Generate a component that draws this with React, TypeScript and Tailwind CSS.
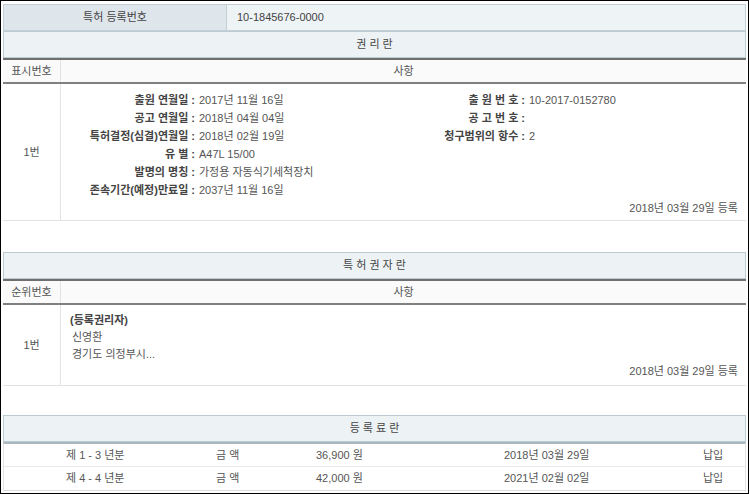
const font = { fontFamily: '"Liberation Sans", "Noto Sans CJK KR", sans-serif' };

const SectionHeader = ({ title }: { title: string }) => (
  <div className="h-[27px] flex items-center justify-center bg-[#edf2f5] border border-[#bccad2] text-[#444]">
    {title}
  </div>
);

const SubHeader = ({ first }: { first: string }) => (
  <div className="flex h-[26px] bg-[#fafafa] border-t-2 border-b-2 border-t-[#6f6f6f] border-b-[#808080] text-[#555]">
    <div className="w-[58px] flex items-center justify-center border-r border-[#e3e3e3]">{first}</div>
    <div className="flex-1 flex items-center justify-center">사항</div>
  </div>
);

const Field = ({ label, value, labelW }: { label: string; value: string; labelW: string }) => (
  <div className="flex h-[18px] items-center">
    <div className={`${labelW} text-right font-bold text-[#444] whitespace-nowrap`}>{label} :</div>
    <div className="pl-[4px] text-[#555] whitespace-nowrap">{value}</div>
  </div>
);

export default function App() {
  const left = [
    ['출원 연월일', '2017년 11월 16일'],
    ['공고 연월일', '2018년 04월 04일'],
    ['특허결정(심결)연월일', '2018년 02월 19일'],
    ['유 별', 'A47L 15/00'],
    ['발명의 명칭', '가정용 자동식기세척장치'],
    ['존속기간(예정)만료일', '2037년 11월 16일'],
  ];
  const right = [
    ['출 원 번 호', '10-2017-0152780'],
    ['공 고 번 호', ''],
    ['청구범위의 항수', '2'],
  ];
  const fees = [
    ['제 1 - 3 년분', '36,900 원', '2018년 03월 29일'],
    ['제 4 - 4 년분', '42,000 원', '2021년 02월 02일'],
  ];

  return (
    <div style={font} className="w-[750px] h-[494px] bg-white overflow-hidden">
      <div className="w-[749px] h-[494px] border border-black pl-[2px] pr-[2px] pt-[3px] text-[11px]">
        {/* 권리란 */}
        <div className="flex h-[27px] border border-[#c3cfd6]">
          <div className="w-[223px] flex items-center justify-center bg-[#dfe6eb] border-r border-[#c3cfd6] text-[#444]">
            특허 등록번호
          </div>
          <div className="flex-1 flex items-center pl-[10px] bg-[#eef3f6] text-[#444]">10-1845676-0000</div>
        </div>
        <SectionHeader title="권 리 란" />
        <SubHeader first="표시번호" />
        <div className="flex h-[137px] border-b border-[#e3e3e3]">
          <div className="w-[58px] flex items-center justify-center border-r border-[#e3e3e3] text-[#555]">1번</div>
          <div className="flex-1 flex flex-col pt-[7px] pr-[8px]">
            <div className="flex">
              <div className="w-[374px] flex flex-col">
                {left.map(([l, v]) => (
                  <Field key={l} label={l} value={v} labelW="w-[134px]" />
                ))}
              </div>
              <div className="flex flex-col">
                {right.map(([l, v]) => (
                  <Field key={l} label={l} value={v} labelW="w-[90px]" />
                ))}
              </div>
            </div>
            <div className="text-right text-[#555] mt-[1px]">2018년 03월 29일 등록</div>
          </div>
        </div>

        {/* 특허권자란 */}
        <div className="mt-[31px]">
          <SectionHeader title="특 허 권 자 란" />
        </div>
        <SubHeader first="순위번호" />
        <div className="flex h-[81px] border-b border-[#e3e3e3]">
          <div className="w-[58px] flex items-center justify-center border-r border-[#e3e3e3] text-[#555]">1번</div>
          <div className="flex-1 flex flex-col pl-[9px] pt-[7px] pr-[8px] text-[#555] leading-[17px]">
            <div className="font-bold text-[#444]">(등록권리자)</div>
            <div className="pl-[2px]">신영환</div>
            <div className="pl-[2px]">경기도 의정부시...</div>
            <div className="text-right">2018년 03월 29일 등록</div>
          </div>
        </div>

        {/* 등록료란 */}
        <div className="mt-[29px]">
          <SectionHeader title="등 록 료 란" />
        </div>
        <div className="border-t-2 border-[#a9b6bd] border-x border-x-[#e3e3e3] border-b border-b-[#dcdcdc]">
          {fees.map(([y, a, d], i) => (
            <div
              key={y}
              className={`grid grid-cols-[62px_150px_100px_188px_199px_1fr] h-[23px] items-center text-[#555] ${i === 0 ? 'border-b border-[#e8e8e8]' : ''}`}
            >
              <div />
              <div>{y}</div>
              <div>금 액</div>
              <div>{a}</div>
              <div>{d}</div>
              <div>납입</div>
            </div>
          ))}
        </div>
      </div>
    </div>
  );
}
